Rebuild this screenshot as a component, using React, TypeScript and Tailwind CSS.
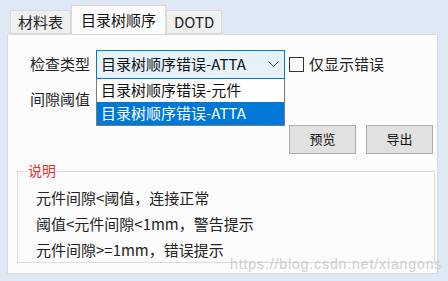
import React from 'react';

const font = { fontFamily: '"Microsoft YaHei", "Noto Sans CJK SC", "Liberation Sans", sans-serif' };

function Tab({ label, active }: { label: string; active?: boolean }) {
  if (active) {
    return (
      <div className="relative z-10 -mb-px flex h-[29px] items-center border border-b-0 border-[#d9d9d9] bg-[#fcfcfc] px-[9px] text-[15px] text-[#111]">
        {label}
      </div>
    );
  }
  return (
    <div className="mt-[5px] flex h-[24px] items-center border border-[#d9d9d9] bg-[#f0f0f0] px-[7px] text-[15px] text-[#222]">
      {label}
    </div>
  );
}

export default function App() {
  return (
    <div className="relative h-[281px] w-[448px] overflow-hidden bg-[#dfe8f5]" style={font}>
      <div className="flex pl-[10px] pt-[5px]">
        <Tab label="材料表" />
        <Tab label="目录树顺序" active />
        <Tab label="DOTD" />
      </div>

      <div className="ml-[7px] h-[240px] w-[431px] border border-[#dadada] bg-[#fcfcfc]">
        <div className="flex items-center pl-[22px] pt-[15px]">
          <span className="w-[66px] text-[15px] text-[#222]">检查类型</span>
          <div className="relative">
            <div className="flex h-[29px] w-[189px] items-center justify-between border border-[#0078d7] bg-[#e5f1fb] pl-[4px] pr-[5px] text-[15px] text-[#111]">
              <span>目录树顺序错误-ATTA</span>
              <svg width="11" height="7" viewBox="0 0 11 7" fill="none" stroke="#555" strokeWidth="1">
                <path d="M0.5 0.5 L5.5 5.5 L10.5 0.5" />
              </svg>
            </div>
            <div className="absolute left-0 top-[29px] z-20 w-[189px] border border-[#7a7a7a] border-t-0 bg-white text-[15px]">
              <div className="flex h-[23px] items-center pl-[4px] text-[#111]">目录树顺序错误-元件</div>
              <div className="flex h-[23px] items-center bg-[#0078d7] pl-[4px] text-white">目录树顺序错误-ATTA</div>
            </div>
          </div>
          <div className="ml-[4px] flex items-center">
            <div className="h-[15px] w-[15px] border border-[#333] bg-white" />
            <span className="ml-[5px] text-[15px] text-[#222]">仅显示错误</span>
          </div>
        </div>

        <div className="pl-[22px] pt-[9px] text-[15px] text-[#222]">间隙阈值</div>

        <div className="flex justify-end gap-[10px] pr-[4px] pt-[14px]">
          <button className="h-[29px] w-[67px] border border-[#adadad] bg-[#e1e1e1] text-[13px] text-[#111]">预览</button>
          <button className="h-[29px] w-[67px] border border-[#adadad] bg-[#e1e1e1] text-[13px] text-[#111]">导出</button>
        </div>

        <div className="relative ml-[9px] mt-[17px] h-[92px] w-[418px] border border-[#dcdcdc] pl-[18px] pt-[13px] text-[15px] leading-[26px] text-[#222]">
          <span className="absolute left-[9px] top-[-10px] bg-[#fcfcfc] px-[1px] text-[14px] leading-[16px] text-[#e03030]">说明</span>
          <div>元件间隙&lt;阈值，连接正常</div>
          <div>阈值&lt;元件间隙&lt;1mm，警告提示</div>
          <div>元件间隙&gt;=1mm，错误提示</div>
        </div>
      </div>

      <div className="absolute left-[230px] top-[254px] text-[14px] tracking-[0.9px] text-[#cfcfcf]" style={{ fontFamily: '"Liberation Sans", sans-serif' }}>
        https://blog.csdn.net/xiangons
      </div>
    </div>
  );
}
